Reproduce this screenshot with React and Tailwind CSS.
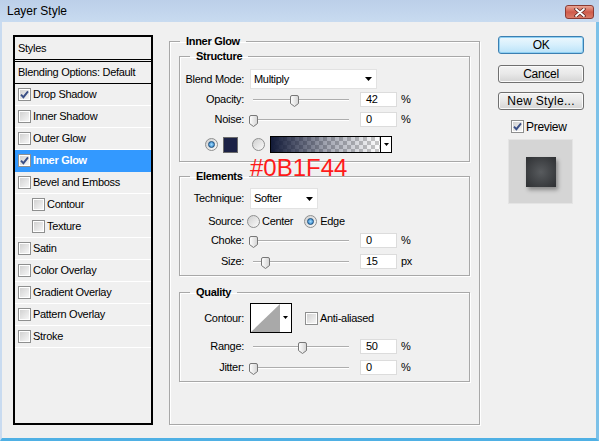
import React from 'react';

const STYLES = [
  { name: 'Drop Shadow', on: true },
  { name: 'Inner Shadow' },
  { name: 'Outer Glow' },
  { name: 'Inner Glow', on: true, active: true },
  { name: 'Bevel and Emboss' },
  { name: 'Contour', sub: true },
  { name: 'Texture', sub: true },
  { name: 'Satin' },
  { name: 'Color Overlay' },
  { name: 'Gradient Overlay' },
  { name: 'Pattern Overlay' },
  { name: 'Stroke' },
];

const Check = ({ on }) => (
  <div className="w-[13px] h-[13px] shrink-0 border border-[#8e8f8f] bg-white p-px">
    <div className="w-full h-full bg-linear-to-br from-[#d2d2d2] to-[#f6f6f6] flex items-center justify-center">
      {on && (
        <svg width="9" height="9" viewBox="0 0 9 9">
          <path d="M1 4.6 L3.4 7.2 L8 1.4" fill="none" stroke="#3a4f86" strokeWidth="1.9" />
        </svg>
      )}
    </div>
  </div>
);

const Radio = ({ on }) => (
  <div className="w-[13px] h-[13px] shrink-0 rounded-full border border-[#8e8f8f] bg-linear-to-br from-[#cfcfcf] to-[#fbfbfb] flex items-center justify-center">
    {on && <div className="w-[7px] h-[7px] rounded-full border border-[#1d4f7c] bg-radial from-[#9fdcff] to-[#1f78c1]" />}
  </div>
);

const Arrow = () => (
  <svg width="7" height="4" viewBox="0 0 7 4" className="shrink-0">
    <path d="M0 0H7L3.5 4Z" fill="#000" />
  </svg>
);

// thumb = pixel offset of the slider thumb from the slider's left edge
const Slider = ({ thumb }) => (
  <div className="relative w-[104px] h-[15px] shrink-0 ml-[5px]">
    <div className="absolute left-[4px] right-[4px] top-[7px] h-[2px] border-t border-[#adadad] border-b border-b-white" />
    <svg className="absolute top-[3px]" style={{ left: thumb }} width="9" height="12" viewBox="0 0 9 12">
      <defs>
        <linearGradient id="th" x1="0" y1="0" x2="1" y2="0">
          <stop offset="0" stopColor="#ffffff" />
          <stop offset="1" stopColor="#d4d4d4" />
        </linearGradient>
      </defs>
      <path d="M2 0.5H7A1.5 1.5 0 0 1 8.5 2V8.5L4.5 11.5L0.5 8.5V2A1.5 1.5 0 0 1 2 0.5Z" fill="url(#th)" stroke="#777" />
    </svg>
  </div>
);

const Num = ({ v }) => (
  <div className="w-[37px] h-[15px] shrink-0 ml-[7px] bg-white border border-[#dcdcdc] pl-[5px] leading-[13px]">{v}</div>
);

const Label = ({ children }) => <div className="w-[64px] shrink-0 text-right">{children}</div>;

const SliderRow = ({ label, thumb, v, unit = '%', className }) => (
  <div className={className}>
    <div className="flex items-center h-[15px]">
      <Label>{label}</Label>
      <Slider thumb={thumb} />
      <Num v={v} />
      <span className="ml-[4px]">{unit}</span>
    </div>
  </div>
);

const Group = ({ title, className, children }) => (
  <fieldset className={`border border-[#a8a8a8] shadow-[inset_1px_1px_0_#fff,1px_1px_0_#fff] min-w-0 ${className}`}>
    <legend className="ml-[10px] px-[6px] font-bold leading-[14px]">{title}</legend>
    {children}
  </fieldset>
);

const Button = ({ children, primary, className }) => (
  <div
    className={
      primary
        ? `h-[18px] w-[86px] rounded-[3px] border border-[#3c7fb1] bg-linear-to-b from-[#ecf7fd] via-[#d6effc] to-[#b9e2f8] shadow-[inset_0_0_0_1px_#8fd0f3] flex items-center justify-center text-[12px] ${className || ''}`
        : `h-[18px] w-[86px] rounded-[3px] border border-[#707070] bg-linear-to-b from-[#f3f3f3] via-[#e8e8e8] to-[#d4d4d4] shadow-[inset_0_0_0_1px_#fbfbfb] flex items-center justify-center text-[12px] ${className || ''}`
    }
  >
    {children}
  </div>
);

export default function App() {
  return (
    <div className="w-[599px] h-[441px] flex flex-col overflow-hidden font-['Liberation_Sans',Arial,sans-serif] text-[11px] tracking-[-0.3px] text-black">
      {/* Title bar */}
      <div className="h-[22px] shrink-0 flex items-start justify-between bg-linear-to-b from-[#bccfe9] to-[#c8dbf0] pr-[5px]">
        <span className="pl-[7px] pt-[4px] text-[12px] leading-[14px] tracking-normal">Layer Style</span>
        <div className="mt-[5px] w-[29px] h-[14px] rounded-[3px] border border-[#8a3a33] bg-linear-to-b from-[#e9a596] via-[#cf5a4a] to-[#d97b68] flex items-center justify-center">
          <svg width="12" height="9" viewBox="0 0 12 9">
            <path d="M2 1L10 8M10 1L2 8" stroke="#5b2520" strokeWidth="3.4" strokeLinecap="round" />
            <path d="M2 1L10 8M10 1L2 8" stroke="#fff" strokeWidth="1.8" strokeLinecap="round" />
          </svg>
        </div>
      </div>

      {/* Body */}
      <div className="flex-1 flex items-start bg-[#f0f0f0] border-l-2 border-l-[#c9dbf0] border-r-[3px] border-r-[#7cc1e8] border-b-[3px] border-b-[#4fb0e4] pl-[11px] pt-[12px]">
        {/* Styles list */}
        <div className="mt-[1px] w-[140px] h-[390px] shrink-0 border-2 border-black bg-[#f0f0f0]">
          <div className="h-[23px] border-b border-black flex items-center pl-[3px]">Styles</div>
          <div className="mt-[1px] h-[23px] border-y border-black flex items-center pl-[3px]">Blending Options: Default</div>
          {STYLES.map((s) => (
            <div
              key={s.name}
              className={`h-[22px] border-b flex items-center gap-[2px] ${s.sub ? 'pl-[17px]' : 'pl-[3px]'} ${s.active ? 'bg-[#3399ff] border-[#3399ff] text-white font-bold' : 'border-white'}`}
            >
              <Check on={s.on} />
              <span>{s.name}</span>
            </div>
          ))}
        </div>

        {/* Inner Glow panel */}
        <fieldset className="ml-[16px] w-[311px] h-[391px] shrink-0 border border-[#a8a8a8] shadow-[inset_1px_1px_0_#fff,1px_1px_0_#fff] px-[9px] pt-[1px]">
          <legend className="ml-[1px] px-[6px] font-bold leading-[14px]">Inner Glow</legend>

          <Group title="Structure" className="relative pt-[6px] pb-[8px]">
            <div className="flex items-center h-[20px]">
              <Label>Blend Mode:</Label>
              <div className="ml-[6px] w-[127px] h-[20px] bg-white border border-[#e2e2e2] flex items-center justify-between pl-[3px] pr-[4px]">
                <span>Multiply</span>
                <Arrow />
              </div>
            </div>
            <SliderRow className="mt-[3px]" label="Opacity:" thumb={41} v="42" />
            <SliderRow className="mt-[5px]" label="Noise:" thumb={0} v="0" />
            <div className="mt-[9px] h-[17px] flex items-center">
              <div className="ml-[25px]"><Radio on /></div>
              <div className="ml-[5px] w-[15px] h-[16px] border border-[#6b6b6b] bg-[#1b2145]" />
              <div className="ml-[14px]"><Radio /></div>
              <div className="ml-[5px] w-[122px] h-[17px] border border-black flex">
                <div className="flex-1 bg-[repeating-conic-gradient(#c8c8c8_0_25%,#ffffff_0_50%)] bg-[length:8px_8px]">
                  <div className="w-full h-full bg-linear-to-r from-[#121a38] via-[#121a38]/40 to-transparent" />
                </div>
                <div className="w-[11px] border-l border-black bg-white flex items-center justify-center">
                  <svg width="5" height="3" viewBox="0 0 5 3"><path d="M0 0H5L2.5 3Z" fill="#000" /></svg>
                </div>
              </div>
            </div>
            <span className="absolute left-[70px] bottom-[-19px] text-[24px] leading-[24px] tracking-normal text-[#ff1a1a] font-normal">#0B1F44</span>
          </Group>

          <Group title="Elements" className="mt-[7px] pt-[5px] pb-[6px]">
            <div className="flex items-center h-[21px]">
              <Label>Technique:</Label>
              <div className="ml-[6px] w-[68px] h-[21px] bg-white border border-[#e2e2e2] flex items-center justify-between pl-[3px] pr-[4px]">
                <span>Softer</span>
                <Arrow />
              </div>
            </div>
            <div className="mt-[6px] h-[13px] flex items-center">
              <Label>Source:</Label>
              <div className="ml-[3px]"><Radio /></div>
              <span className="ml-[2px]">Center</span>
              <div className="ml-[11px]"><Radio on /></div>
              <span className="ml-[3px]">Edge</span>
            </div>
            <SliderRow className="mt-[5px]" label="Choke:" thumb={0} v="0" />
            <SliderRow className="mt-[6px]" label="Size:" thumb={12} v="15" unit="px" />
          </Group>

          <Group title="Quality" className="mt-[9px] pt-[4px] pb-[6px]">
            <div className="flex items-center h-[30px]">
              <Label>Contour:</Label>
              <div className="ml-[6px] w-[42px] h-[30px] border border-black bg-white flex">
                <svg width="29" height="28" viewBox="0 0 29 28" className="shrink-0">
                  <path d="M0 28L29 0V28Z" fill="#a9a9a9" />
                </svg>
                <div className="flex-1 flex justify-center pt-[12px]">
                  <svg width="5" height="3" viewBox="0 0 5 3"><path d="M0 0H5L2.5 3Z" fill="#000" /></svg>
                </div>
              </div>
              <div className="ml-[13px]"><Check /></div>
              <span className="ml-[2px]">Anti-aliased</span>
            </div>
            <SliderRow className="mt-[6px]" label="Range:" thumb={49} v="50" />
            <SliderRow className="mt-[6px]" label="Jitter:" thumb={0} v="0" />
          </Group>
        </fieldset>

        {/* Buttons */}
        <div className="ml-[18px] mt-[2px] w-[86px] shrink-0 flex flex-col">
          <Button primary>OK</Button>
          <Button className="mt-[11px]">Cancel</Button>
          <Button className="mt-[9px] tracking-[0.3px]">New Style...</Button>
          <div className="mt-[10px] h-[13px] flex items-center pl-[13px] gap-[2px] text-[12px]">
            <Check on />
            <span>Preview</span>
          </div>
          <div className="mt-[6px] ml-[10px] w-[65px] h-[65px] bg-[#d5d5d5] border border-[#e4e4e4] flex items-center justify-center">
            <div className="w-[30px] h-[30px] bg-radial from-[#585b5e] to-[#2e3033] shadow-[2px_3px_4px_rgba(0,0,0,0.35)]" />
          </div>
        </div>
      </div>
    </div>
  );
}
